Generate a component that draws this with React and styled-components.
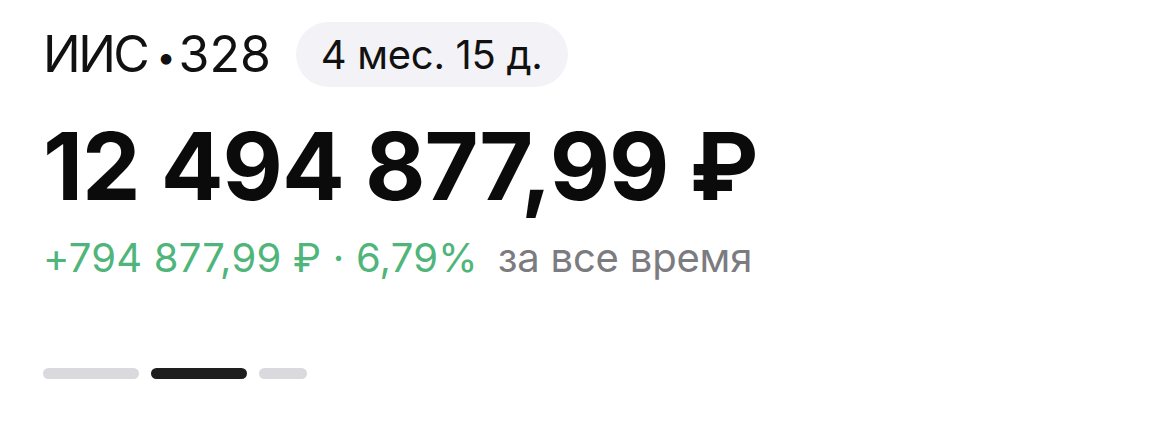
import styled, { createGlobalStyle } from "styled-components";

const GlobalStyle = createGlobalStyle`
    body {
        margin: 0;
        background: #ffffff;
        font-family: Inter, "Noto Sans", sans-serif;
        -webkit-font-smoothing: antialiased;
    }
`;

const Wrapper = styled.div`
    padding: 22px 43px 0;
`;

const Header = styled.div`
    display: flex;
    align-items: center;
    gap: 25px;
`;

const Title = styled.div`
    display: flex;
    align-items: center;
    font-size: 50px;
    line-height: 65px;
    color: #111111;
`;

const Name = styled.span`
    letter-spacing: -2.5px;
`;

const Bullet = styled.span`
    margin: 4px 3px 0 9px;
    font-size: 34px;
    line-height: 1;
`;

const Pill = styled.div`
    height: 65px;
    padding: 0 25px;
    display: flex;
    align-items: center;
    border-radius: 33px;
    background-color: #f3f3f7;
    font-size: 40px;
    letter-spacing: -0.3px;
    color: #111111;
`;

const Amount = styled.div`
    margin-top: 33px;
    font-size: 93px;
    line-height: 93px;
    font-weight: 700;
    letter-spacing: -1px;
    color: #0b0b0b;
`;

const Change = styled.div`
    margin-top: 21px;
    display: flex;
    align-items: baseline;
    gap: 20px;
    font-size: 40px;
    line-height: 48px;
`;

const ChangeValue = styled.span`
    color: ${(props) => (props.positive ? "#4fb57a" : "#e5484d")};
    letter-spacing: 0.2px;
`;

const Period = styled.span`
    color: #7b7b80;
    letter-spacing: -0.2px;
`;

const Pager = styled.div`
    margin-top: 86px;
    display: flex;
    gap: 12px;
`;

const Dash = styled.div`
    width: ${(props) => (props.short ? "48px" : "96px")};
    height: 11px;
    border-radius: 6px;
    background-color: ${(props) => (props.active ? "#1e1e1e" : "#d9d9de")};
`;

const App = () => {
    return (
        <>
            <GlobalStyle />
            <Wrapper>
                <Header>
                    <Title>
                        <Name>ИИС</Name>
                        <Bullet>•</Bullet>
                        <span>328</span>
                    </Title>
                    <Pill>4 мес. 15 д.</Pill>
                </Header>
                <Amount>12 494 877,99 ₽</Amount>
                <Change>
                    <ChangeValue positive>+794 877,99 ₽ · 6,79%</ChangeValue>
                    <Period>за все время</Period>
                </Change>
                <Pager>
                    <Dash />
                    <Dash active />
                    <Dash short />
                </Pager>
            </Wrapper>
        </>
    );
};

export default App;
